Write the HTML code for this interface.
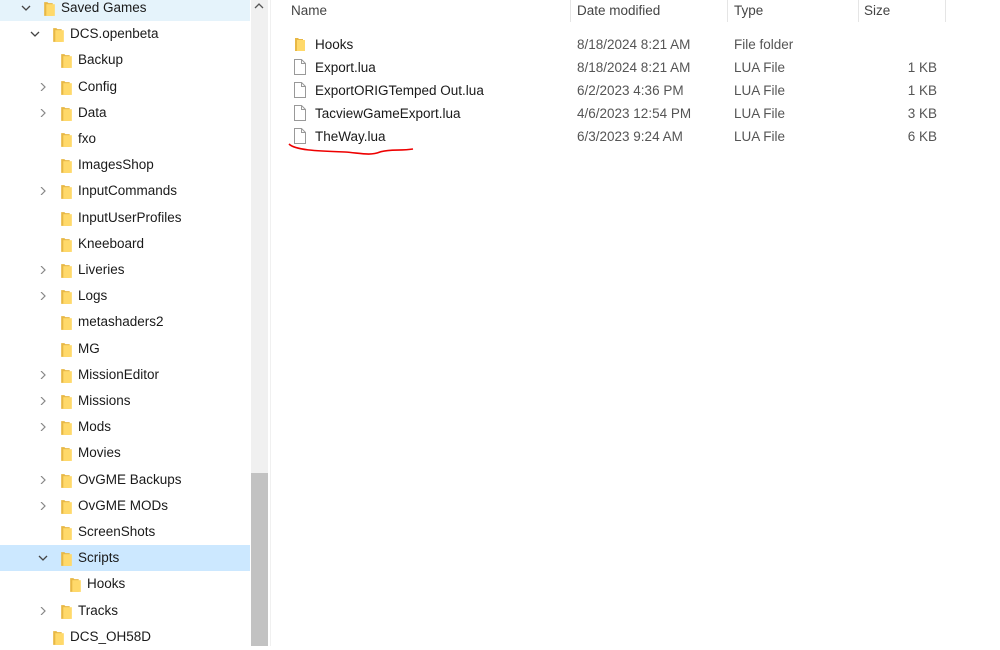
<!DOCTYPE html>
<html><head><style>
body{margin:0;width:1000px;height:646px;overflow:hidden;background:#fff;font-family:"Liberation Sans",sans-serif;font-size:13.5px;color:#1a1a1a;position:relative}
.r{position:absolute;left:0;width:250px;height:26px}
.t{position:absolute;top:5px;white-space:nowrap}
.f{position:absolute;top:6px;width:11px;height:16px}
.c{position:absolute;top:9px;width:10px;height:8px}
.h{position:absolute;top:3px;color:#444;font-size:13.5px}
.sep{position:absolute;top:0;width:1px;height:22px;background:#e5e5e5}
.fr{position:absolute;left:280px;height:23px;width:670px}
.fr span{position:absolute;top:3px;white-space:nowrap}
.d{color:#555}
</style></head><body>
<svg width="0" height="0" style="position:absolute"><defs>
<symbol id="fo" viewBox="0 0 10 15"><path d="M0 1h3l1 1h4v12H0z" fill="#e8b845"/><path d="M2 3h8v11H2z" fill="#ffd96a"/></symbol>
<symbol id="fi" viewBox="0 0 12 16"><path d="M0.5 0.5h7l4 4v11h-11z" fill="#fff" stroke="#999"/><path d="M7.5 0.5v4h4" fill="none" stroke="#999"/></symbol>
<symbol id="cd" viewBox="0 0 10 8"><path d="M1 2l4 4 4-4" fill="none" stroke="#444" stroke-width="1.3"/></symbol>
<symbol id="cr" viewBox="0 0 10 8"><path d="M3 0l4 4-4 4" fill="none" stroke="#888" stroke-width="1.2"/></symbol>
</defs></svg>
<div class="r" style="top:-5px;background:#e5f3fb"></div>
<div class="r" style="top:545px;background:#cce8ff"></div>
<div id="tree"></div>
<div style="position:absolute;left:251px;top:0;width:17px;height:646px;background:#f0f0f0"></div>
<div style="position:absolute;left:251px;top:473px;width:17px;height:173px;background:#c2c2c2"></div>
<svg style="position:absolute;left:254px;top:2px" width="10" height="8"><path d="M1 6l4-4 4 4" fill="none" stroke="#555" stroke-width="1.3"/></svg>
<div style="position:absolute;left:270px;top:0;width:1px;height:646px;background:#f0f0f0"></div>
<span class="h" style="left:291px">Name</span>
<div class="sep" style="left:570px"></div>
<span class="h" style="left:577px">Date modified</span>
<div class="sep" style="left:727px"></div>
<span class="h" style="left:734px">Type</span>
<div class="sep" style="left:858px"></div>
<span class="h" style="left:864px">Size</span>
<div class="sep" style="left:945px"></div>
<div id="files"></div>
<svg style="position:absolute;left:285px;top:140px" width="135" height="20"><path d="M4 4 C10 10,30 11,60 12 C75 13,85 16,95 12 C105 9,115 11,128 9" fill="none" stroke="#e00" stroke-width="1.6"/></svg>
<script>
var items=[["Saved Games",0,1,1],["DCS.openbeta",1,1,1],["Backup",2,0],["Config",2,1],["Data",2,1],["fxo",2,0],["ImagesShop",2,0],["InputCommands",2,1],["InputUserProfiles",2,0],["Kneeboard",2,0],["Liveries",2,1],["Logs",2,1],["metashaders2",2,0],["MG",2,0],["MissionEditor",2,1],["Missions",2,1],["Mods",2,1],["Movies",2,0],["OvGME Backups",2,1],["OvGME MODs",2,1],["ScreenShots",2,0],["Scripts",2,1,1],["Hooks",3,0],["Tracks",2,1],["DCS_OH58D",1,0]];
var h="";items.forEach(function(it,i){var top=Math.round(-5+26.2*i);var ind=[0,9,17,26][it[1]];
h+='<div class="r" style="top:'+top+'px">';
if(it[2])h+='<svg class="c" style="left:'+(21+ind)+'px"><use href="#'+(it[3]?'cd':'cr')+'"/></svg>';
h+='<svg class="f" style="left:'+(44+ind)+'px"><use href="#fo"/></svg><span class="t" style="left:'+(61+ind)+'px">'+it[0]+'</span></div>';});
document.getElementById('tree').innerHTML=h;
var fs=[["Hooks","8/18/2024 8:21 AM","File folder","",1],["Export.lua","8/18/2024 8:21 AM","LUA File","1 KB"],["ExportORIGTemped Out.lua","6/2/2023 4:36 PM","LUA File","1 KB"],["TacviewGameExport.lua","4/6/2023 12:54 PM","LUA File","3 KB"],["TheWay.lua","6/3/2023 9:24 AM","LUA File","6 KB"]];
h="";fs.forEach(function(f,i){var top=34+23*i;
h+='<div class="fr" style="top:'+top+'px">'+(f[4]?'<svg style="position:absolute;left:15px;top:3px" width="10" height="15"><use href="#fo"/></svg>':'<svg style="position:absolute;left:14px;top:2px" width="12" height="16"><use href="#fi"/></svg>')+
'<span style="left:35px">'+f[0]+'</span><span class="d" style="left:297px">'+f[1]+'</span><span class="d" style="left:454px">'+f[2]+'</span><span class="d" style="right:13px">'+f[3]+'</span></div>';});
document.getElementById('files').innerHTML=h;
</script>
</body></html>
